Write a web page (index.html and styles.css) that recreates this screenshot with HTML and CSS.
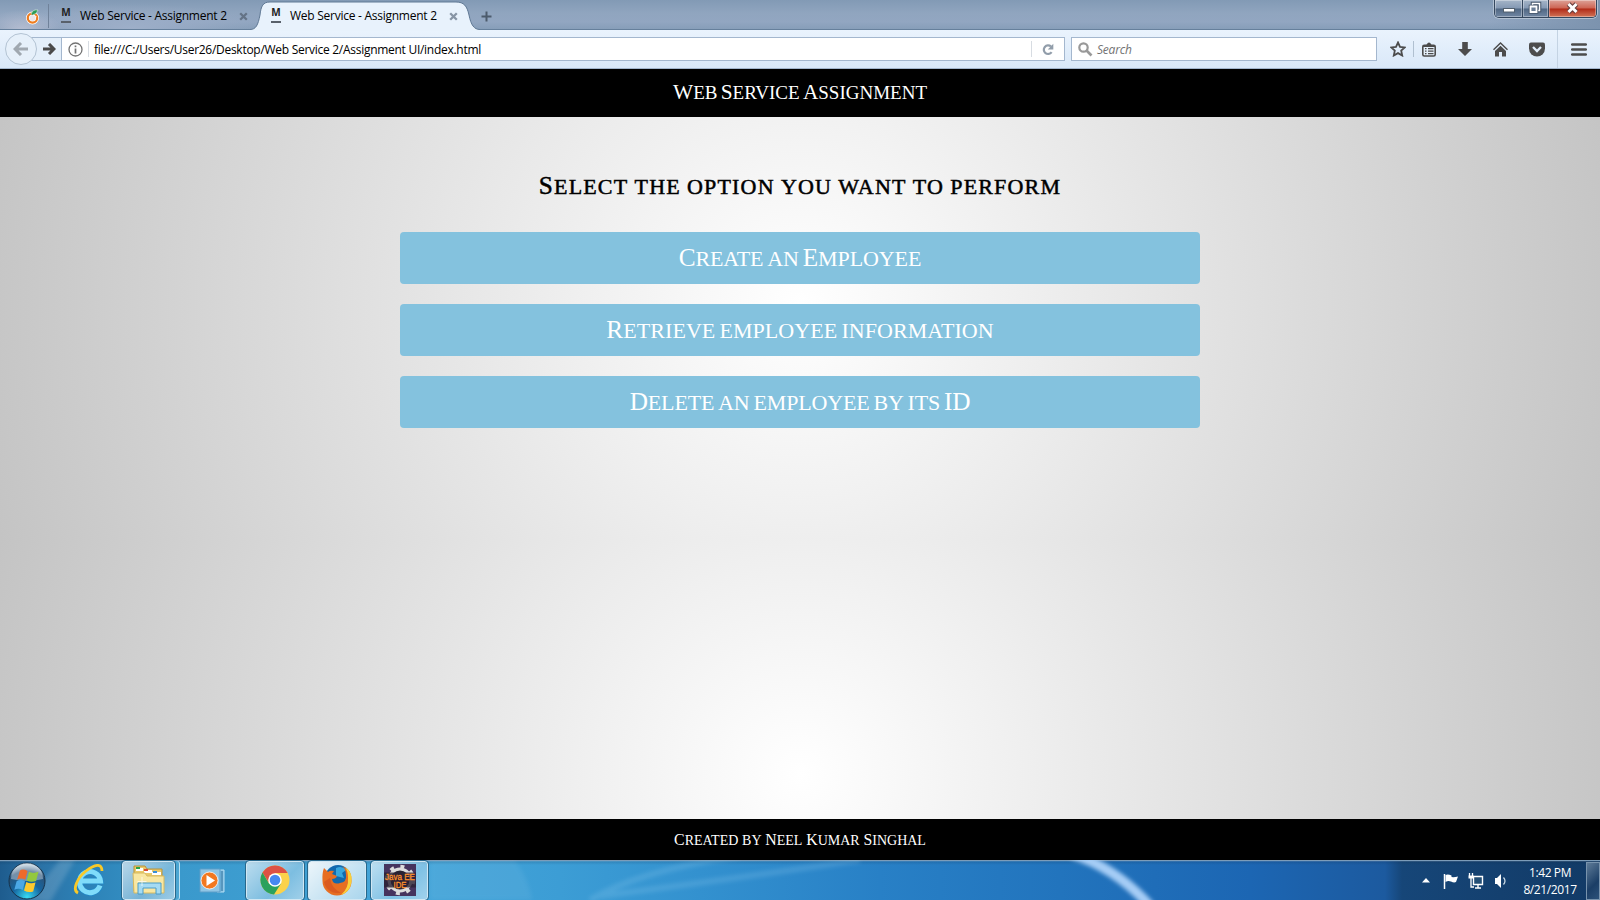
FILE: index.html
```html
<!DOCTYPE html>
<html lang="en">
<head>
<meta charset="utf-8">
<title>Web Service - Assignment 2</title>
<link rel="stylesheet" href="styles.css">
</head>
<body>
<div class="screen">
  <div class="tabstrip">
    <div class="tab pinned">
      <svg width="16" height="17" viewBox="0 0 16 17"><circle cx="7.500" cy="10" r="6.500" fill="#fff"/><circle cx="7.500" cy="10" r="4.700" fill="none" stroke="#ee7d20" stroke-width="2.200"/><circle cx="7.500" cy="10" r="3" fill="#e9e6ea"/><path d="M6 6Q8 1 13 2Q12 6 8 7L12 9" fill="#2a9c55" stroke="#fff" stroke-width=".5"/></svg>
    </div>
    <div class="tab first">
      <span class="fav">M</span><span class="tab-title">Web Service - Assignment 2</span>
      <svg class="close" width="9" height="9" viewBox="0 0 9 9"><path d="M1.200 1.200l6.600 6.600M7.800 1.200L1.200 7.800" stroke="#647386" stroke-width="2.300"/></svg>
    </div>
    <div class="tab active">
      <svg class="tab-shape" width="230" height="31" viewBox="0 0 230 31"><path d="M0 29.500C6 29.500 8 25 10 15C11 6 13 2 20 2H206C214 2 217 6 219 15C221 25 224 29.500 230 29.500V31H0Z" fill="#e8f2fc"/><path d="M0 29.500C6 29.500 8 25 10 15C11 6 13 2 20 2H206C214 2 217 6 219 15C221 25 224 29.500 230 29.500" fill="none" stroke="#5f7894"/></svg>
      <span class="fav">M</span><span class="tab-title">Web Service - Assignment 2</span>
      <svg class="close" width="9" height="9" viewBox="0 0 9 9"><path d="M1.200 1.200l6.600 6.600M7.800 1.200L1.200 7.800" stroke="#8795a5" stroke-width="2.300"/></svg>
    </div>
    <svg class="plus" width="11" height="11" viewBox="0 0 11 11"><path d="M5.500 .5v10M.5 5.500h10" stroke="#4c5b6c" stroke-width="2"/></svg>
    <div class="controls">
      <span class="ctl min"><svg width="27" height="16" viewBox="0 0 27 16"><rect x="8.500" y="8.500" width="11" height="3.500" fill="#fff" stroke="#52606e"/></svg></span>
      <span class="ctl max"><svg width="25" height="16" viewBox="0 0 25 16"><path d="M9.500 3.500h7v7h-7z" fill="none" stroke="#46566a" stroke-width="3.500"/><path d="M9.500 3.500h7v7h-7z" fill="none" stroke="#fff" stroke-width="1.500"/><path d="M7.500 6.500h6v5.500h-6z" fill="#6b7e95" stroke="#46566a" stroke-width="3.500"/><path d="M7.500 6.500h6v5.500h-6z" fill="#6b7e95" stroke="#fff" stroke-width="1.800"/></svg></span>
      <span class="ctl cls"><svg width="47" height="16" viewBox="0 0 47 16"><path d="M19.500 4l8 8M27.500 4L19.500 12" stroke="#643b3b" stroke-width="5"/><path d="M19.500 4l8 8M27.500 4L19.500 12" stroke="#fff" stroke-width="3"/></svg></span>
    </div>
  </div>

  <div class="toolbar">
    <div class="back"><svg width="16" height="14" viewBox="0 0 16 14"><path d="M8 1L2 7l6 6M2.500 7H15" fill="none" stroke="#a0a8b0" stroke-width="3"/></svg></div>
    <div class="urlbar">
      <div class="forward"><svg width="13" height="12" viewBox="0 0 13 12"><path d="M6 1l5 5-5 5M0 6h10" fill="none" stroke="#4a4a4a" stroke-width="3"/></svg></div>
      <svg class="info" width="15" height="15" viewBox="0 0 15 15"><circle cx="7.500" cy="7.500" r="6.500" fill="none" stroke="#737373" stroke-width="1.300"/><path d="M7.500 6.500v5M7.500 3.500v1.800" stroke="#737373" stroke-width="1.700"/></svg>
      <span class="vline"></span>
      <span class="url">file:///C:/Users/User26/Desktop/Web Service 2/Assignment UI/index.html</span>
      <span class="vline"></span>
      <svg class="reload" width="12" height="13" viewBox="0 0 12 13"><path d="M9.600 9.200A4.300 4.300 0 1 1 9 3.500" fill="none" stroke="#919daa" stroke-width="2.200"/><path d="M11.300 .8v5.700H5.800Z" fill="#919daa"/></svg>
    </div>
    <div class="search">
      <svg width="15" height="15" viewBox="0 0 15 15"><circle cx="5.500" cy="5.500" r="4.200" fill="none" stroke="#999" stroke-width="2.200"/><path d="M8.500 8.500l5 5" stroke="#999" stroke-width="2.600"/></svg>
      <span>Search</span>
    </div>
    <div class="tools">
      <svg width="16" height="16" viewBox="0 0 16 16"><path d="M8 1.500l2 4.300 4.700.6-3.500 3.200 1 4.900L8 12.100l-4.200 2.400 1-4.900L1.300 6.400 6 5.800Z" fill="none" stroke="#4c4c4c" stroke-width="1.800"/></svg>
      <span class="vline tall"></span>
      <svg class="clip" width="14" height="15" viewBox="0 0 14 15"><path d="M3.500 3.500C5 3.500 5 .5 7 .5S9 3.500 10.500 3.500Z" fill="#4c4c4c"/><rect x=".8" y="3.300" width="12.400" height="10.700" rx="1.500" fill="#e4effa" stroke="#4c4c4c" stroke-width="1.600"/><path d="M1 4h12" stroke="#4c4c4c" stroke-width="2"/><path d="M3 6.700h1.500M6 6.700h5.500M3 9.200h1.500M6 9.200h5.500M3 11.700h1.500M6 11.700h5.500" stroke="#4c4c4c" stroke-width="1.300"/></svg>
      <svg class="down" width="14" height="14" viewBox="0 0 14 14"><path d="M4.200 0h5.600v7H14l-7 7-7-7h4.200Z" fill="#4c4c4c"/></svg>
      <svg class="home" width="15" height="15" viewBox="0 0 15 15"><path d="M.5 7.800L7.500 1l7 6.800" fill="none" stroke="#4c4c4c" stroke-width="1.400"/><path d="M7.500 3.800L13 9v5.500H9V10H6v4.500H2V9Z" fill="#4c4c4c"/></svg>
      <svg class="pocket" width="16" height="15" viewBox="0 0 16 15"><path d="M2 .5h12q2 0 2 2V6.500a8 8 0 0 1-16 0V2.500q0-2 2-2Z" fill="#4c4c4c"/><path d="M4 5l4 4 4-4" fill="none" stroke="#e1edf9" stroke-width="2.300"/></svg>
      <span class="vline full"></span>
      <svg class="menu" width="16" height="13" viewBox="0 0 16 13"><path d="M1.200 1.500h13.600M1.200 6.500h13.600M1.200 11.500h13.600" stroke="#4c4c4c" stroke-width="2.600" stroke-linecap="round"/></svg>
    </div>
  </div>

  <div class="page">
    <header class="site-head caps"><span class="fit"><b>W</b>eb <b>S</b>ervice <b>A</b>ssignment</span></header>
    <main class="content">
      <h2 class="caps"><b>S</b>elect the option you want to perform</h2>
      <a class="btn caps create"><span><b>C</b>reate an <b>E</b>mployee</span></a>
      <a class="btn caps retrieve"><span><b>R</b>etrieve employee information</span></a>
      <a class="btn caps delete"><span><b>D</b>elete an employee by its <b>ID</b></span></a>
    </main>
    <footer class="site-foot caps"><span><b>C</b>reated by <b>N</b>eel <b>K</b>umar <b>S</b>inghal</span></footer>
  </div>

  <div class="taskbar">
    <svg class="glow" width="1600" height="40" viewBox="0 0 1600 40">
      <defs><filter id="soft" x="-10%" y="-50%" width="120%" height="200%"><feGaussianBlur stdDeviation="2"/></filter></defs>
      <path d="M430 0H515Q530 22 532 40H430Z" fill="#fff" opacity=".06" filter="url(#soft)"/>
      <path d="M590 40Q640 10 740 -4M600 36Q710 22 860 0" fill="none" stroke="#9fd4f3" stroke-width="6" opacity=".2" filter="url(#soft)"/>
      <path d="M1072 -6Q1116 8 1150 46" fill="none" stroke="#a6cdf6" stroke-width="10" filter="url(#soft)"/>
      <path d="M25 42L60 0H75L50 42Z" fill="#fff" opacity=".15" filter="url(#soft)"/>
    </svg>
    <svg class="orb" width="38" height="38" viewBox="0 0 38 38">
      <defs><radialGradient id="orb" cx=".5" cy=".95" r=".9"><stop offset="0" stop-color="#38dcf4"/><stop offset=".45" stop-color="#1565a0"/><stop offset=".8" stop-color="#2b5378"/><stop offset="1" stop-color="#b4c9d8"/></radialGradient></defs>
      <circle cx="19" cy="19" r="18" fill="url(#orb)" stroke="#16324a"/><path d="M3 17A16 16 0 0 1 35 17Q19 21 3 17Z" fill="#fff" opacity=".35"/>
      <path d="M12 8.500Q15 6.500 19.500 9L17.300 17.800Q13 15.500 9 17.700Z" fill="#ee6a2b"/><path d="M21 9.800Q25 12 30.500 9.800L28 19Q23 20.800 18.700 18.500Z" fill="#93c83e"/><path d="M8.600 19.200Q13 17 17 19.300L14.700 28Q11 25.500 6.300 27.700Z" fill="#4ba8e6"/><path d="M18.300 20Q22.500 22.300 27.500 20.500L25.200 29.500Q20 31 16 28.500Z" fill="#fdc92d"/>
    </svg>
    <svg class="ie" width="32" height="32" viewBox="0 0 32 32"><path d="M27 21.500A10.500 10.500 0 1 1 27.500 17H9" fill="none" stroke="#2389c8" stroke-width="6.500"/><path d="M27 21.500A10.500 10.500 0 1 1 27.500 17H9" fill="none" stroke="#7fdcfa" stroke-width="5"/><path d="M5 29C-1 26 4 14 13 7S29 -1 29 7" fill="none" stroke="#f9c928" stroke-width="2.800"/></svg>
    <div class="task explorer"><svg width="34" height="32" viewBox="0 0 34 32"><path d="M2 27V2h11l2 3h15v22Z" fill="#e9c96b" stroke="#b7923b"/><path d="M4 4h7v3H4zM12 6h8v3h-8zM20 8h9v3h-9z" fill="#fff"/><path d="M4 3h4v2H4z" fill="#27a344"/><path d="M12 5h4v2h-4z" fill="#dd4b31"/><path d="M21 7h4v2h-4z" fill="#378ed8"/><path d="M1 9h12l2 3h17v17H2Z" fill="#f8e7a2" stroke="#d6b960"/><path d="M6 30V19h23v11h-5v-6H11v6Z" fill="#a5dbf3" stroke="#4a9cc8"/><path d="M10 13v9M5.500 17.500h9" stroke="#fff" opacity=".7"/></svg></div>
    <svg class="wmp" width="26" height="26" viewBox="0 0 26 26"><path d="M18 2h7v22h-7z" fill="#77b9df" stroke="#b4dcf1"/><path d="M1 1h20v23H1z" fill="#8fc5e5" stroke="#5c9dc7"/><path d="M23 3v20" stroke="#39759d"/><circle cx="10.500" cy="12.500" r="8.500" fill="#f27820" stroke="#fff" stroke-width=".8"/><path d="M7.500 7l8.500 5.500-8.500 5.500Z" fill="#fff"/></svg>
    <div class="task chrome"><svg width="30" height="30" viewBox="0 0 30 30"><circle cx="15" cy="15" r="14.500" fill="#fbd24a"/><path d="M2.500 7.500A14.500 14.500 0 0 1 27.600 8H15L9 18Z" fill="#dd5144"/><path d="M2.500 7.500A14.500 14.500 0 0 0 14 29.500L21 18.500H9Z" fill="#2aa15d"/><circle cx="15" cy="15" r="6.800" fill="#fff"/><circle cx="15" cy="15" r="5.300" fill="#4688f1"/></svg></div>
    <div class="task firefox"><svg width="32" height="32" viewBox="0 0 32 32"><circle cx="17" cy="14" r="13" fill="#1269ae"/><path d="M15 4q6-3 10 2l-4 3 2 5-8-2Z" fill="#37a6dd"/><path d="M3 4L7 8Q9 6 13 7L11 10L16 12Q15 15 11 15Q12 21 19 19Q26 18 25 11Q25 5 21 2Q31 6 30.500 17A14.500 14.500 0 0 1 1.500 17Q1 9 3 4Z" fill="#e76e22"/><path d="M24 3Q32 8 30.500 18Q29 28 20 31Q28 24 27 14Q27 7 24 3Z" fill="#fbcf39"/><path d="M3 18Q6 30 20 29Q10 24 9 14Z" fill="#c94420" opacity=".45"/></svg></div>
    <div class="task eclipse"><svg width="32" height="32" viewBox="0 0 32 32"><rect width="32" height="32" fill="#46345e"/><circle cx="16" cy="16" r="11" fill="#292434" stroke="#ddd" stroke-width="3"/><circle cx="16" cy="16" r="13.500" fill="none" stroke="#ddd" stroke-width="3.500" stroke-dasharray="4 6.600"/><rect y="8.500" width="32" height="15" fill="#2b2233" opacity=".8"/><text x="1" y="15.500" textLength="30" lengthAdjust="spacingAndGlyphs">Java EE</text><text x="9.500" y="23.500" textLength="13" lengthAdjust="spacingAndGlyphs">IDE</text></svg></div>
    <div class="tray">
      <svg class="up" width="8" height="5" viewBox="0 0 8 5"><path d="M4 0l4 4.500H0Z" fill="#fff"/></svg>
      <svg class="flag" width="16" height="16" viewBox="0 0 16 16"><path d="M1.500 1v15" stroke="#fff" stroke-width="1.500"/><path d="M2.500 2Q5 1 8.500 2.500V4Q11 4.500 15 3.500L13 9Q11 10 8 8.500Q5 7.500 2.500 9Z" fill="#fff"/></svg>
      <svg class="net" width="16" height="16" viewBox="0 0 16 16"><path d="M5.500 3.500h9v8h-9zM10 12v3M7 15h6" fill="#234e75" stroke="#fff" stroke-width="1.400"/><path d="M1.500 0v3M4.500 0v3M3 5v9h3" fill="none" stroke="#fff" stroke-width="1.300"/><path d="M.5 2.500h5v3h-5z" fill="#fff"/></svg>
      <svg class="vol" width="13" height="16" viewBox="0 0 13 16"><path d="M1 5h2L7 1v14L3 11H1Z" fill="#fff"/><path d="M9.500 4.500Q12.500 8 9.500 11.500" fill="none" stroke="#d2dfe9" stroke-width="1.200"/></svg>
      <div class="clock"><span>1:42 PM</span><span>8/21/2017</span></div>
      <div class="peek"></div>
    </div>
  </div>
</div>
</body>
</html>
```
FILE: styles.css
```css
* { box-sizing: border-box; }
body { margin: 0; font-family: "Open Sans", "Noto Sans", sans-serif; font-size: 12px; }
svg { display: block; flex: none; }
.screen { width: 1600px; height: 900px; display: flex; flex-direction: column; overflow: hidden; }

/* Tab strip */
.tabstrip {
  height: 30px; flex: none; display: flex; align-items: center; position: relative;
  border-bottom: 1px solid #66809c;
  background:
    radial-gradient(ellipse 40px 20px at 22px 30px, #b6bed2, transparent),
    radial-gradient(ellipse 130px 24px at 130px 28px, #9eafc9, transparent),
    linear-gradient(90deg, transparent 93%, #7c93ae 100%),
    linear-gradient(#829ab5, #90a5bf 45%, #92a6c1 75%, #879eb9);
}
.pinned { width: 49px; height: 24px; padding-left: 25px; border-right: 1px solid #70829a; align-self: flex-start; margin-top: 4px; }
.tab { display: flex; align-items: center; }
.first { width: 201px; height: 30px; padding-left: 12px; }
.active { width: 230px; height: 30px; padding-left: 21px; position: relative; }
.tab-shape { position: absolute; left: 0; top: 0; }
.active > span, .active .close { position: relative; }
.fav { width: 10px; font: bold 10px/11px "Open Sans", sans-serif; color: #222; border-bottom: 2px solid #59616b; height: 16px; margin-top: 1px; text-align: center; }
.tab-title { width: 148px; margin-left: 9px; letter-spacing: -0.26px; white-space: nowrap; line-height: 30px; padding-top: 2px; color: #000; }
.close { margin-left: 11px; margin-top: 3px; }
.plus { margin-left: 1px; margin-top: 3px; }
.controls { margin-left: auto; margin-right: 3px; height: 18px; display: flex; align-self: flex-start; border: 1px solid #34475e; border-top: 0; border-radius: 0 0 5px 5px; overflow: hidden; box-shadow: 0 0 0 1px #b2c1d2; }
.ctl { border-right: 1px solid #34475e; box-shadow: inset 0 0 0 1px rgba(255,255,255,.35); background: linear-gradient(#a5b5c8, #8499b3 48%, #506783 52%, #7187a3); }
.cls { border-right: 0; background: linear-gradient(#dda298, #cd6452 48%, #b12a17 52%, #d17457); }

/* Navigation toolbar */
.toolbar { height: 39px; flex: none; display: flex; align-items: center; background: linear-gradient(#eaf3fd, #d9e8f8); border-bottom: 1px solid #a2b5cc; }
.back { width: 32px; height: 32px; margin-left: 5px; border: 1px solid #b3c3d3; border-radius: 50%; background: #e6f0fa; display: flex; align-items: center; justify-content: center; position: relative; }
.urlbar { width: 1034px; height: 24px; margin-left: -6px; display: flex; align-items: center; border: 1px solid #a4b7ce; background: #fff; }
.forward { width: 30px; height: 22px; padding-left: 11px; display: flex; align-items: center; border-right: 1px solid #a4b7ce; background: #e4effa; }
.info { margin-left: 6px; }
.vline { width: 1px; height: 16px; background: #d7dce2; margin-left: 5px; }
.url { width: 932px; margin-left: 5px; letter-spacing: -0.28px; white-space: nowrap; padding-top: 1px; }
.reload { margin-left: 10px; }
.search { width: 306px; height: 24px; margin-left: 6px; border: 1px solid #a4b7ce; background: #fff; display: flex; align-items: center; padding-left: 6px; gap: 4px; color: #737373; font-style: italic; letter-spacing: -.2px; }
.tools { display: flex; align-items: center; height: 38px; margin-left: 13px; }
.tall { height: 16px; margin-left: 7px; background: #b0c0d0; }
.clip { margin-left: 8px; }
.down { margin-left: 22px; }
.home { margin-left: 21px; }
.pocket { margin-left: 21px; }
.full { height: 38px; margin-left: 12px; background: #c4d3e3; }
.menu { margin-left: 13px; }

/* Web page */
.page { height: 791px; flex: none; display: flex; flex-direction: column; background: radial-gradient(circle, #fff, #c4c4c4) 0 0 / 1600px 470px; }
.caps { font-family: "Liberation Serif", serif; font-variant: small-caps; font-weight: normal; text-align: center; white-space: nowrap; }
.caps b { font-size: .79em; font-weight: inherit; }
.site-head { height: 48px; background: #000; color: #fff; font-size: 27px; line-height: 43px; word-spacing: -3.5px; }
.content { flex: 1; width: 800px; margin: 0 auto; padding-top: 48px; }
h2 { margin: 0 0 31px; height: 36px; line-height: 36px; font-size: 32px; -webkit-text-stroke: .5px #000; color: #000; letter-spacing: 1.18px; word-spacing: -3px; }
.btn { display: block; height: 52px; margin-bottom: 20px; border-radius: 4px; background: #84c2de; color: #fff; font-size: 32px; line-height: 46px; word-spacing: -4px; }
.create { letter-spacing: -.1px; }
.retrieve { letter-spacing: .07px; }
.delete { letter-spacing: -.15px; }
.site-foot { height: 41px; background: #000; color: #fff; font-size: 20px; line-height: 38px; word-spacing: -1.2px; }

/* Taskbar */
.taskbar {
  height: 40px; flex: none; display: flex; align-items: center; position: relative; overflow: hidden;
  background: linear-gradient(rgba(10,40,70,.25), transparent 5px),
    linear-gradient(90deg, #1e5c8e, #2b74a8 45px, #2d83b8 90px, #3a99cc 180px, #43a5d9 400px, #3c9dd5 560px, #3391cf 700px, #2880c6 880px, #2274bd 1060px, #1c66b3 1250px, #1c5a9f 1385px, #164678 1402px, #123a66 1600px);
  box-shadow: inset 0 1px #7c9cb9, inset 0 2px rgba(255,255,255,.1);
}
.taskbar > * { position: relative; }
.taskbar > .glow { position: absolute; left: 0; top: 0; }
.orb { margin-left: 8px; margin-top: 1px; }
.ie { margin-left: 27px; }
.task { height: 39px; border: 1px solid #d1e7f3; outline: 1px solid #27678b; outline-offset: 0; border-radius: 3px; background: linear-gradient(135deg, rgba(255,255,255,.65), rgba(255,255,255,.32) 60%, rgba(255,255,255,.5)); display: flex; align-items: center; justify-content: center; }
.explorer { width: 53px; margin-left: 17px; box-shadow: 4px 0 #4ba6d2, 5px 0 #bce0f2; }
.wmp { margin-left: 24px; margin-top: 2px; }
.chrome { width: 58px; margin-left: 21px; }
.firefox { width: 58px; margin-left: 4px; background: linear-gradient(135deg, rgba(255,255,255,.9), rgba(255,255,255,.55)); }
.eclipse { width: 57px; margin-left: 5px; }
.eclipse text { font: 9.500px "Liberation Sans", sans-serif; fill: #ff912b; stroke: #ff912b; stroke-width: .3px; }
.tray { display: flex; align-items: center; margin-left: auto; height: 40px; padding-top: 1px; color: #fff; }
.flag { margin-left: 13px; }
.net { margin-left: 9px; }
.vol { margin-left: 10px; }
.clock { width: 64px; margin-left: 11px; display: flex; flex-direction: column; align-items: center; line-height: 17px; padding-top: 1px; letter-spacing: -.4px; }
.peek { width: 14px; height: 38px; margin-left: 4px; border: 1px solid #7893ad; background: linear-gradient(135deg, #5e7b98, #1b3e66 60%, #2d527a); }
```
